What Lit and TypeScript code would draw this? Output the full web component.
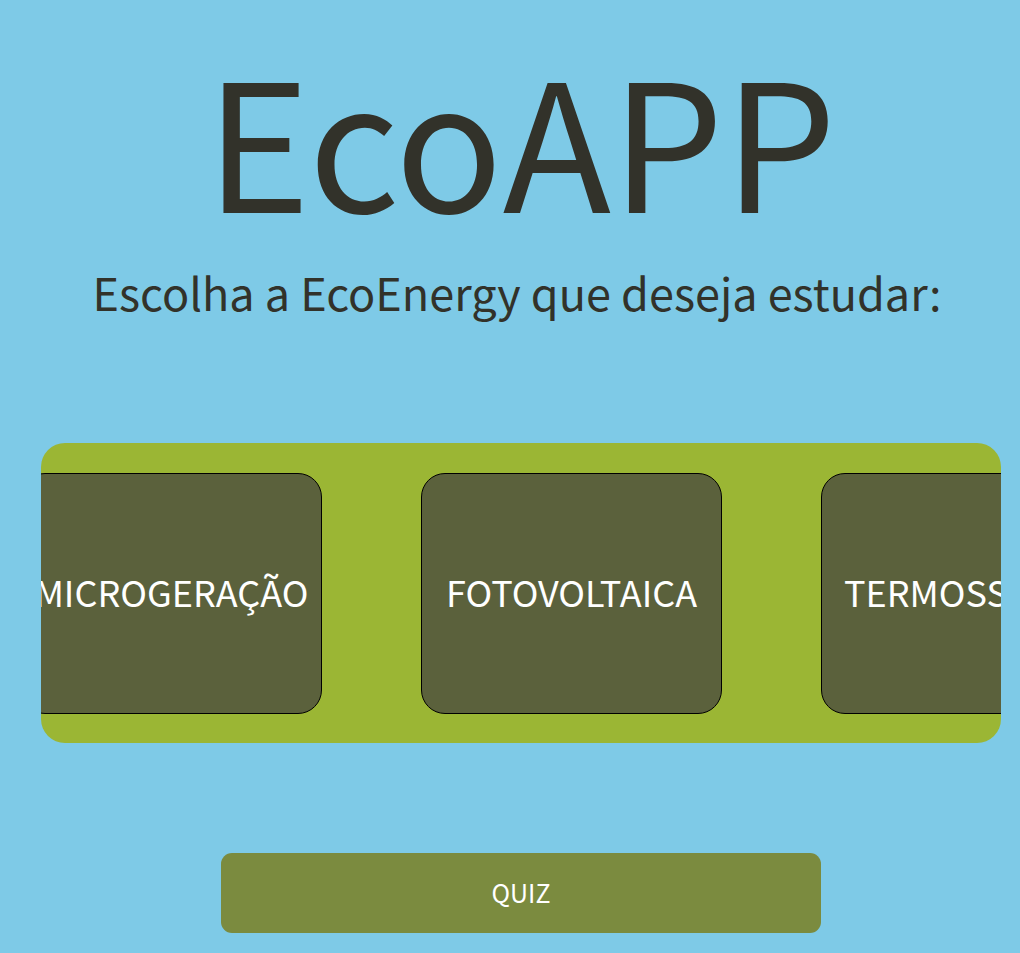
import { LitElement, html, css } from "lit";
import { customElement } from "lit/decorators.js";

@customElement("app-root")
export class AppRoot extends LitElement {
  static styles = css`
    :host {
      display: block;
      min-height: 100vh;
      box-sizing: border-box;
      padding: 16px 19px 20px 41px;
      background: #7ecae7;
      color: #32322a;
      font-family: "Noto Sans CJK SC", "Noto Sans", sans-serif;
    }
    main {
      display: flex;
      flex-direction: column;
      align-items: center;
    }
    h1,
    p {
      margin: 0;
      font-weight: 400;
      text-align: center;
    }
    .title {
      font-size: 178px;
      line-height: 240px;
    }
    .subtitle {
      margin-top: 6px;
      padding-right: 8px;
      font-size: 45px;
      line-height: 60px;
    }
    .carousel {
      display: flex;
      gap: 99px;
      width: 100%;
      box-sizing: border-box;
      margin-top: 121px;
      padding: 30px 0 29px;
      border-radius: 24px;
      background: #9bb634;
      overflow: hidden;
    }
    .card {
      flex: none;
      width: 301px;
      height: 241px;
      padding: 0 0 6px;
      border: 1px solid #000;
      border-radius: 24px;
      background: #5b613c;
      color: #fff;
      font: inherit;
      font-size: 36px;
      white-space: nowrap;
    }
    .card:first-child {
      margin-left: -20px;
    }
    .quiz {
      width: 600px;
      max-width: 100%;
      height: 80px;
      margin-top: 110px;
      padding: 0 0 2px;
      border: 0;
      border-radius: 11px;
      background: #7b8b3f;
      color: #fff;
      font: inherit;
      font-size: 25px;
    }
  `;

  private topics = ["MICROGERAÇÃO", "FOTOVOLTAICA", "TERMOSSOLAR"];

  render() {
    return html`
      <main>
        <h1 class="title">EcoAPP</h1>
        <p class="subtitle">Escolha a EcoEnergy que deseja estudar:</p>
        <div class="carousel">
          ${this.topics.map((t) => html`<button class="card">${t}</button>`)}
        </div>
        <button class="quiz">QUIZ</button>
      </main>
    `;
  }
}
